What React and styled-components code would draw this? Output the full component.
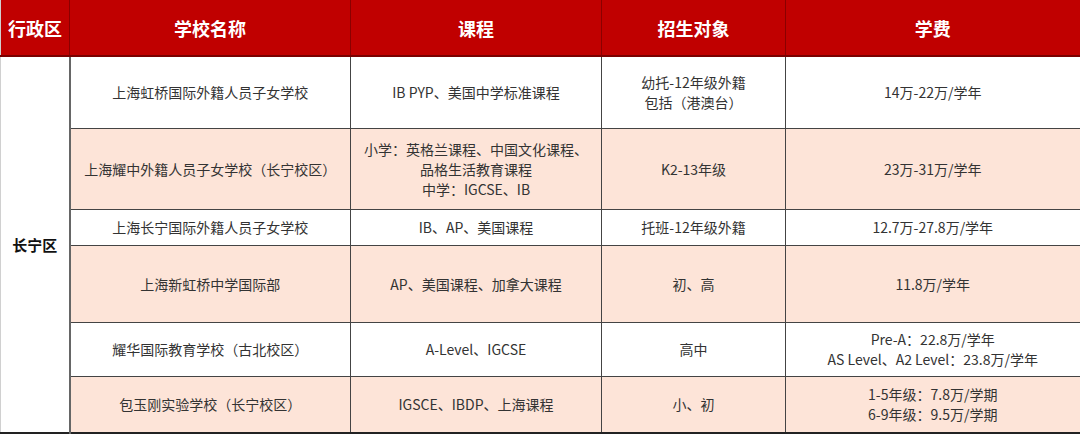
import React from "react";
import styled, { createGlobalStyle } from "styled-components";

const Global = createGlobalStyle`
  html, body { margin: 0; padding: 0; background: #fff; }
  body { font-family: "Noto Sans CJK SC", "Noto Sans", sans-serif; }
`;

const Table = styled.table`
  width: 1080px;
  border-collapse: collapse;
  table-layout: fixed;
  border-left: 1px solid #d0d0d0;
  border-right: 2px solid #222;
  border-bottom: 2px solid #222;
`;

const Col = styled.col`
  width: ${(p) => p.$w}px;
`;

const HeadCell = styled.th`
  height: 55px;
  padding: 0;
  background: #c00000;
  color: #fff;
  font-size: 18px;
  font-weight: 700;
  text-align: center;
  vertical-align: middle;
  border-left: 1px solid #8a0000;
  border-bottom: 2px solid #7a0000;
  &:first-child { border-left: none; }
`;

const Row = styled.tr`
  height: ${(p) => p.$h}px;
  background: ${(p) => (p.$pink ? "#fde4d8" : "#ffffff")};
`;

const Cell = styled.td`
  padding: 0 4px;
  text-align: center;
  vertical-align: middle;
  font-size: 14px;
  line-height: 20px;
  color: #333;
  border: 1px solid #444;
  border-top: ${(p) => (p.$first ? "none" : "1px solid #444")};
`;

const DistrictCell = styled.td`
  background: #fff;
  text-align: center;
  vertical-align: middle;
  font-size: 15px;
  font-weight: 700;
  color: #111;
  padding: 0;
  border-right: 2px solid #666;
`;

const Line = styled.div`
  white-space: nowrap;
`;

const rows = [
  {
    h: 72,
    school: ["上海虹桥国际外籍人员子女学校"],
    course: ["IB PYP、美国中学标准课程"],
    target: ["幼托-12年级外籍", "包括（港澳台）"],
    fee: ["14万-22万/学年"],
  },
  {
    h: 81,
    pink: true,
    school: ["上海耀中外籍人员子女学校（长宁校区）"],
    course: ["小学：英格兰课程、中国文化课程、", "品格生活教育课程", "中学：IGCSE、IB"],
    target: ["K2-13年级"],
    fee: ["23万-31万/学年"],
  },
  {
    h: 36,
    school: ["上海长宁国际外籍人员子女学校"],
    course: ["IB、AP、美国课程"],
    target: ["托班-12年级外籍"],
    fee: ["12.7万-27.8万/学年"],
  },
  {
    h: 77,
    pink: true,
    school: ["上海新虹桥中学国际部"],
    course: ["AP、美国课程、加拿大课程"],
    target: ["初、高"],
    fee: ["11.8万/学年"],
  },
  {
    h: 54,
    school: ["耀华国际教育学校（古北校区）"],
    course: ["A-Level、IGCSE"],
    target: ["高中"],
    fee: ["Pre-A：22.8万/学年", "AS Level、A2 Level：23.8万/学年"],
  },
  {
    h: 57,
    pink: true,
    school: ["包玉刚实验学校（长宁校区）"],
    course: ["IGSCE、IBDP、上海课程"],
    target: ["小、初"],
    fee: ["1-5年级：7.8万/学期", "6-9年级：9.5万/学期"],
  },
];

const Lines = ({ items }) => items.map((t, i) => <Line key={i}>{t}</Line>);

export default function App() {
  return (
    <>
      <Global />
      <Table>
        <colgroup>
          <Col $w={69} />
          <Col $w={281} />
          <Col $w={251} />
          <Col $w={184} />
          <Col $w={295} />
        </colgroup>
        <thead>
          <tr>
            <HeadCell>行政区</HeadCell>
            <HeadCell>学校名称</HeadCell>
            <HeadCell>课程</HeadCell>
            <HeadCell>招生对象</HeadCell>
            <HeadCell>学费</HeadCell>
          </tr>
        </thead>
        <tbody>
          {rows.map((r, i) => (
            <Row key={i} $h={r.h} $pink={r.pink}>
              {i === 0 && <DistrictCell rowSpan={rows.length}>长宁区</DistrictCell>}
              <Cell $first={i === 0}><Lines items={r.school} /></Cell>
              <Cell $first={i === 0}><Lines items={r.course} /></Cell>
              <Cell $first={i === 0}><Lines items={r.target} /></Cell>
              <Cell $first={i === 0}><Lines items={r.fee} /></Cell>
            </Row>
          ))}
        </tbody>
      </Table>
    </>
  );
}
